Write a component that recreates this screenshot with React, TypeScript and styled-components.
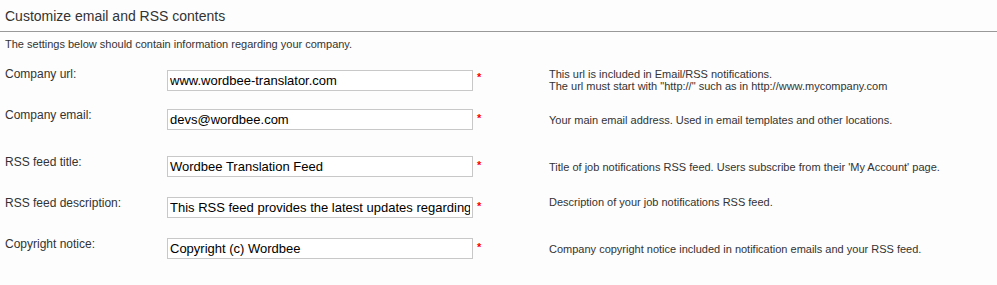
import React from 'react';
import styled, { createGlobalStyle } from 'styled-components';

const GlobalStyle = createGlobalStyle`
  body {
    margin: 0;
    background: #fdfdfd;
    font-family: "Liberation Sans", Arial, Helvetica, sans-serif;
    color: #333;
  }
`;

const Page = styled.div`
  width: 997px;
  height: 285px;
  overflow: hidden;
`;

const Header = styled.div`
  padding: 8px 5px 6px;
  border-bottom: 1px solid #999;
`;

const Title = styled.h2`
  margin: 0;
  font-size: 14px;
  line-height: 17px;
  font-weight: normal;
  color: #333;
`;

const Intro = styled.p`
  margin: 6px 0 17px 5px;
  font-size: 11px;
  line-height: 13px;
`;

const Form = styled.div`
  display: flex;
  flex-direction: column;
  gap: 20px;
  padding-left: 5px;
`;

const Row = styled.div<{ $extra?: number }>`
  display: grid;
  grid-template-columns: 162px 306px 76px 1fr;
  align-items: center;
  height: 21px;
  margin-bottom: ${(p) => p.$extra ?? 0}px;
`;

const Label = styled.label`
  align-self: start;
  margin-top: -1px;
  font-size: 12px;
  line-height: 14px;
`;

const Input = styled.input`
  box-sizing: border-box;
  width: 306px;
  height: 21px;
  margin: 0;
  padding: 0 2px;
  border: 1px solid #c8c8c8;
  background: #fff;
  font-family: "Liberation Sans", Arial, Helvetica, sans-serif;
  font-size: 13px;
  color: #000;
  outline: none;
`;

const Required = styled.span`
  align-self: start;
  margin: 3px 0 0 4px;
  color: #f00;
  font-size: 11px;
  font-weight: bold;
  line-height: 13px;
`;

const Help = styled.div<{ $top?: boolean }>`
  font-size: 11px;
  line-height: 12px;
  ${(p) => (p.$top ? 'align-self: start; margin-top: -1px;' : '')}
`;

type Field = {
  label: string;
  value: string;
  help: React.ReactNode;
  extra?: number;
  top?: boolean;
};

const fields: Field[] = [
  {
    label: 'Company url:',
    value: 'www.wordbee-translator.com',
    help: (
      <>
        This url is included in Email/RSS notifications.
        <br />
        The url must start with "http://" such as in http://www.mycompany.com
      </>
    ),
  },
  {
    label: 'Company email:',
    value: 'devs@wordbee.com',
    help: 'Your main email address. Used in email templates and other locations.',
    extra: 6,
  },
  {
    label: 'RSS feed title:',
    value: 'Wordbee Translation Feed',
    help: "Title of job notifications RSS feed. Users subscribe from their 'My Account' page.",
  },
  {
    label: 'RSS feed description:',
    value: 'This RSS feed provides the latest updates regarding your jobs',
    help: 'Description of your job notifications RSS feed.',
    top: true,
  },
  {
    label: 'Copyright notice:',
    value: 'Copyright (c) Wordbee',
    help: 'Company copyright notice included in notification emails and your RSS feed.',
  },
];

const App: React.FC = () => {
  return (
    <Page>
      <GlobalStyle />
      <Header>
        <Title>Customize email and RSS contents</Title>
      </Header>
      <Intro>The settings below should contain information regarding your company.</Intro>
      <Form>
        {fields.map((f) => (
          <Row key={f.label} $extra={f.extra}>
            <Label>{f.label}</Label>
            <Input defaultValue={f.value} />
            <Required>*</Required>
            <Help $top={f.top}>{f.help}</Help>
          </Row>
        ))}
      </Form>
    </Page>
  );
};

export default App;
